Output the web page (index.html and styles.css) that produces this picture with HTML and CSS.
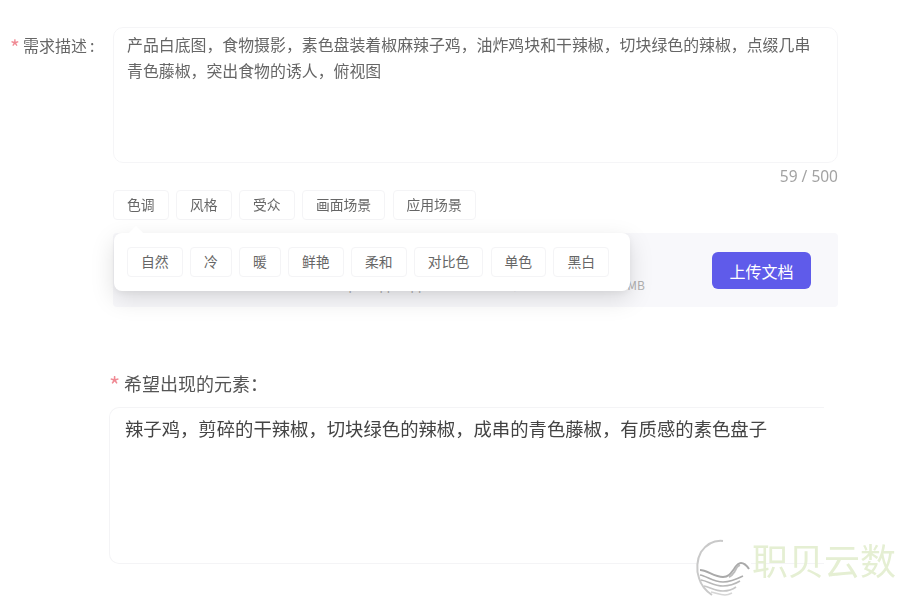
FILE: index.html
```html
<!DOCTYPE html>
<html lang="zh-CN">
<head>
<meta charset="utf-8">
<title>需求描述</title>
<link rel="stylesheet" href="styles.css">
</head>
<body>
<main class="page">
  <section class="brief">
    <div class="brief-label"><span class="star">*</span><span>需求描述</span><span class="colon">:</span></div>
    <div class="brief-body">
      <div class="textbox">产品白底图，食物摄影，素色盘装着椒麻辣子鸡，油炸鸡块和干辣椒，切块绿色的辣椒，点缀几串青色藤椒，突出食物的诱人，俯视图</div>
      <div class="counter">59 / 500</div>
      <div class="tags">
        <span class="tag">色调</span>
        <span class="tag">风格</span>
        <span class="tag">受众</span>
        <span class="tag">画面场景</span>
        <span class="tag">应用场景</span>
      </div>
      <div class="upload">
        <span class="upload-note">支持上传 doc、docx、pdf、ppt、pptx、txt 格式文档，文件大小不超过 20 MB</span>
        <button class="upload-btn" type="button">上传文档</button>
      </div>
      <div class="popover">
        <span class="tag">自然</span>
        <span class="tag">冷</span>
        <span class="tag">暖</span>
        <span class="tag">鲜艳</span>
        <span class="tag">柔和</span>
        <span class="tag">对比色</span>
        <span class="tag">单色</span>
        <span class="tag">黑白</span>
      </div>
    </div>
  </section>
  <section class="elements">
    <div class="elements-label"><span class="star star-lg">*</span><span>希望出现的元素：</span></div>
    <div class="elements-box">辣子鸡，剪碎的干辣椒，切块绿色的辣椒，成串的青色藤椒，有质感的素色盘子</div>
  </section>
</main>
<div class="watermark">
  <svg class="wm-logo" width="54" height="58" viewBox="0 0 54 58" fill="none">
    <path d="M26 1C17 0 9 5 4 12 0 19-1 30 2 38c2 7 7 13 13 17" stroke="#c9c9c9" stroke-width="2"/>
    <path d="M3 30c7 0 14 7 23 7 6 0 8-4 11-8 2-3 4-6 7-6 3 0 6 3 8 6" stroke="#a9a9a9" stroke-width="2"/>
    <path d="M38 31c-2 3-3 5-6 6M43 25c-3 1-4 3-5 6" stroke="#bcbcbc" stroke-width="2"/>
    <path d="M3 35c7 1 13 7 23 7 8 0 14-3 20-6" stroke="#aeaeae" stroke-width="1.6"/>
    <path d="M4 40c7 1 13 6 22 6 7 0 12-2 17-5" stroke="#b9b9b9" stroke-width="1.6"/>
    <path d="M7 46c6 1 11 5 19 5 5 0 9-1 13-4" stroke="#c6c6c6" stroke-width="1.6"/>
    <path d="M14 52c5 1 9 3 14 3 3 0 5-1 7-2" stroke="#d6d6d6" stroke-width="1.6"/>
  </svg>
  <span class="wm-text">职贝云数</span>
</div>
</body>
</html>
```
FILE: styles.css
```css
* { box-sizing: border-box; }
html, body { margin: 0; padding: 0; background: #fff; }
body {
  width: 902px;
  height: 603px;
  overflow: hidden;
  position: relative;
  font-family: "Noto Sans CJK SC", "Liberation Sans", sans-serif;
  color: #555;
}
.page { padding-top: 27px; filter: blur(.35px); }
.brief { display: flex; }
.brief-label {
  width: 113px;
  padding: 6px 0 0 10px;
  font-size: 16px;
  line-height: 24px;
  display: flex;
  color: #666;
}
.star { color: #f08a94; width: 13px; font-size: 21px; line-height: 28px; }
.colon { margin-left: 3px; }
.brief-body { width: 725px; position: relative; }
.textbox {
  height: 136px;
  border: 1px solid #f5f5f7;
  border-radius: 10px;
  padding: 4px 13px;
  font-size: 15.9px;
  line-height: 26px;
  color: #666;
}
.counter {
  height: 27px;
  text-align: right;
  font-family: "Noto Sans", sans-serif;
  font-size: 15.5px;
  line-height: 26px;
  color: #a3a3a3;
}
.tags { display: flex; gap: 7.4px; height: 43px; }
.tag {
  height: 30px;
  padding: 0 13px;
  border: 1px solid #f4f4f6;
  border-radius: 4px;
  background: #fff;
  font-size: 13.8px;
  line-height: 27px;
  color: #666;
  white-space: nowrap;
}
.upload {
  height: 74px;
  background: #f8f8fb;
  border-radius: 4px;
  display: flex;
  justify-content: flex-end;
  align-items: center;
  padding-right: 27px;
  position: relative;
}
.upload-note {
  margin-right: 67px;
  padding-top: 29px;
  font-size: 12px;
  line-height: 16px;
  color: #b0b0b0;
  white-space: nowrap;
}
.upload-btn {
  width: 99px;
  height: 37px;
  margin-top: 1px;
  border: 0;
  border-radius: 6px;
  background: #5f5bea;
  color: #fff;
  font-family: inherit;
  font-size: 16px;
  padding: 0;
}
.popover {
  position: absolute;
  left: 1px;
  top: 206px;
  width: 516px;
  height: 58px;
  padding: 14px 13px;
  display: flex;
  gap: 7.3px;
  background: #fff;
  border-radius: 8px;
  box-shadow: 0 8px 24px rgba(0, 0, 0, .13), 0 2px 6px rgba(0, 0, 0, .05);
}
.popover::before {
  content: "";
  position: absolute;
  left: 17px;
  top: -5px;
  width: 10px;
  height: 10px;
  background: #fff;
  transform: rotate(45deg);
}
.elements { margin: 0 0 0 109px; padding-top: 64px; }
.elements-label {
  height: 36px;
  display: flex;
  font-size: 18px;
  line-height: 24px;
  color: #555;
}
.star-lg { width: 15px; font-size: 24px; line-height: 28px; }
.elements-box {
  width: 715px;
  height: 157px;
  border: 1px solid #f4f4f6;
  border-right: 0;
  border-radius: 10px 0 0 10px;
  padding: 6px 15px;
  font-size: 18.35px;
  line-height: 28px;
  color: #444;
}
.watermark {
  position: absolute;
  left: 697px;
  top: 540px;
  display: flex;
  gap: 1px;
  background: linear-gradient(#fff, #fff) no-repeat 0 0 / 54px 58px;
}
.wm-logo { overflow: visible; }
.wm-text {
  font-size: 36px;
  line-height: 36px;
  height: 36px;
  margin-top: 1px;
  color: #e5efd3;
}
```
